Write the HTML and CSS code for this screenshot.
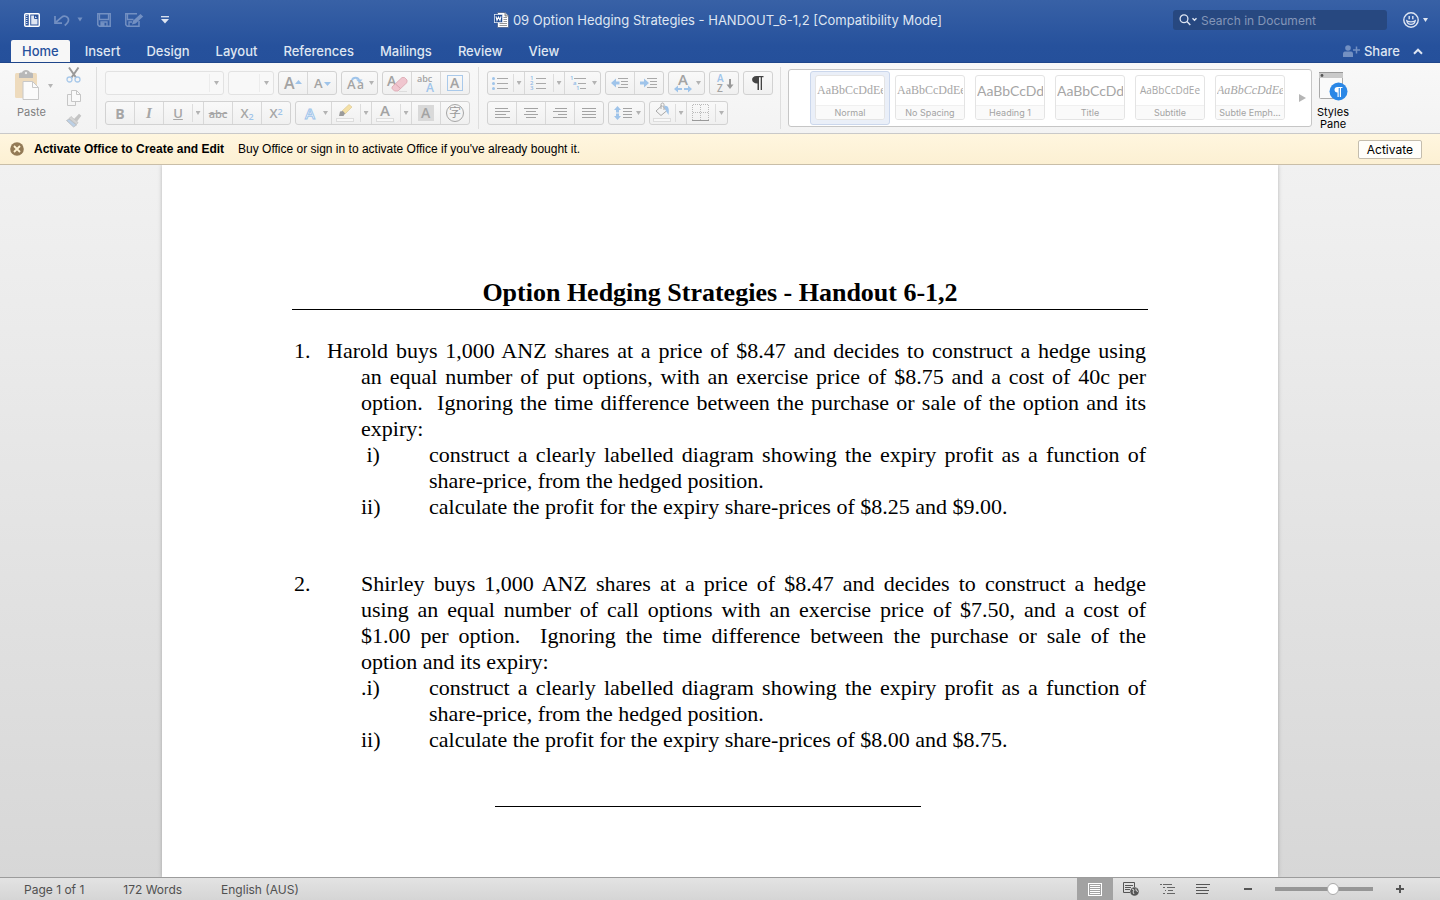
FILE: index.html
```html
<!DOCTYPE html>
<html lang="en">
<head>
<meta charset="utf-8">
<title>09 Option Hedging Strategies - HANDOUT_6-1,2</title>
<link rel="stylesheet" href="styles.css">
</head>
<body>
<header class="titlebar">
  <div class="top-row">
    <div class="quick">
      <button class="plain" aria-label="Document gallery"><svg width="16" height="14" viewBox="0 0 16 14"><rect x=".75" y=".75" width="14.5" height="12.5" rx="1" fill="#2b539b" stroke="#fff" stroke-width="1.5"/><path d="M2.8 2v10" stroke="#fff" stroke-width="1.2" stroke-dasharray="1 1"/><path d="M5.500 1v12" stroke="#fff" stroke-width="1.500"/><path d="M7.200 2.500h3.300l3 3v6H7.200z" fill="#dfe6f2"/><path d="M10.500 2v3.500H14" fill="none" stroke="#2b539b"/></svg></button>
      <button class="plain undo" aria-label="Undo"><svg width="29" height="14" viewBox="0 0 29 14"><g fill="none" stroke="#7390c2" stroke-width="1.7"><path d="M1 3v7.200h7"/><path d="M1.500 9.500 7.500 4.300c3-2.300 7-.5 7 2.700 0 2.200-1.300 3.500-3.800 5.500"/></g><path d="M23.500 4.500h5L26 8.500z" fill="#7390c2"/></svg></button>
      <button class="plain" aria-label="Save"><svg width="14" height="14" viewBox="0 0 14 14"><path d="M.8.8h12.400v12.400H2.300L.8 11.700z" fill="none" stroke="#7390c2" stroke-width="1.500"/><path d="M2.500 1v5.500h9V1M4 13V9h6v4" fill="none" stroke="#7390c2" stroke-width="1.300"/><path d="M4 9.500h3.500V13H4z" fill="#7390c2"/></svg></button>
      <button class="plain" aria-label="Save as"><svg width="19" height="14" viewBox="0 0 19 14"><path d="M14 8v5.200H2.300L.8 11.700V.8H12" fill="none" stroke="#7390c2" stroke-width="1.500"/><path d="M2.500 1v5.500h6M4 13V9h3" fill="none" stroke="#7390c2" stroke-width="1.300"/><path d="m7 11.500 1-3.700L15.500 1l2.700 2.500-7.500 7z" fill="#7390c2"/></svg></button>
      <button class="plain customize" aria-label="Customize toolbar"><svg width="8" height="8" viewBox="0 0 8 8"><path d="M0 .7h8" stroke="#dfe6f2" stroke-width="1.300"/><path d="M0 3h8L4 7.500z" fill="#dfe6f2"/></svg></button>
    </div>
    <h1 class="window-title"><svg width="15" height="16" viewBox="0 0 15 16"><path d="M3.500.5H11l3.500 3.500v11.500h-11z" fill="#fff" stroke="#4b5f85" stroke-width=".8"/><path d="M11 .5V4h3.500" fill="#ccc" stroke="#666" stroke-width=".7"/><path d="M9.500 5.500H13M9.500 7.500H13M9.500 9.500H13M5.500 11.500H13M5.500 13.500H13" stroke="#8a8a8a" stroke-width=".9"/><rect x=".4" y="2.400" width="8.200" height="8.200" fill="#214c93" stroke="#dfe6f2" stroke-width=".8"/><path d="m2 4.300 1 4L4.500 5 6 8.300l1-4" fill="none" stroke="#fff" stroke-width="1.100"/></svg><span>09 Option Hedging Strategies - HANDOUT_6-1,2 [Compatibility Mode]</span></h1>
    <div class="top-right">
      <label class="search"><svg width="18" height="12" viewBox="0 0 18 12"><circle cx="5" cy="4.700" r="3.900" fill="none" stroke="#dfe6f2" stroke-width="1.300"/><path d="m8 7.500 3.300 3.500M13.500 4.300l2 2 2-2" fill="none" stroke="#dfe6f2" stroke-width="1.400"/></svg><input type="text" placeholder="Search in Document" aria-label="Search in Document"></label>
      <button class="plain" aria-label="Feedback"><svg width="25" height="16" viewBox="0 0 25 16"><circle cx="8" cy="8" r="7.200" fill="none" stroke="#dfe6f2" stroke-width="1.400"/><path d="M6.200 4v3.200M9.800 4v3.200" stroke="#dfe6f2" stroke-width="1.400"/><path d="M3.800 8.800c.8 4.700 7.600 4.700 8.400 0-2 1.500-6.400 1.500-8.400 0z" fill="none" stroke="#dfe6f2" stroke-width="1.200"/><path d="M20 6h5l-2.500 4z" fill="#dfe6f2"/></svg></button>
    </div>
  </div>
  <nav class="tabs">
    <button class="tab active">Home</button><button class="tab">Insert</button><button class="tab">Design</button><button class="tab">Layout</button><button class="tab">References</button><button class="tab">Mailings</button><button class="tab">Review</button><button class="tab">View</button>
    <button class="share"><svg width="17" height="12" viewBox="0 0 17 12"><circle cx="5" cy="3" r="2.800" fill="#7390c2"/><path d="M0 12V9c0-2 1-2.500 3-2.500h4c2 0 3 .5 3 2.500v3z" fill="#7390c2"/><path d="M13.500 1.500v7M10 5h7" stroke="#7390c2" stroke-width="1.500"/></svg>Share</button>
    <button class="plain collapse" aria-label="Collapse ribbon"><svg width="10" height="7" viewBox="0 0 10 7"><path d="m1 5.700 4-4 4 4" fill="none" stroke="#dfe6f2" stroke-width="2"/></svg></button>
  </nav>
</header>

<section class="ribbon" aria-label="Home ribbon">
  <div class="clipboard">
    <button class="paste"><svg width="38" height="30" viewBox="0 0 38 30"><rect y="3" width="22" height="25" rx="1.500" fill="#eedbbd"/><path d="M4 8V4c0-1 1-1.500 3-1.500C7.500 1 9 0 11 0s3.500 1 4 2.500c2 0 3 .5 3 1.500v4z" fill="#b8b8b8"/><circle cx="11" cy="3" r="1.200" fill="#eee"/><path d="M8 11.500h9.500l6 6v12H8z" fill="#fbfbfb" stroke="#c8c8c8"/><path d="M17.500 11.500v6h6" fill="none" stroke="#c8c8c8"/><path d="M33 14h5l-2.500 4z" fill="#b5b5b5"/></svg><span>Paste</span></button>
    <div class="clip-tools">
      <button class="plain" aria-label="Cut"><svg width="16" height="16" viewBox="0 0 16 16"><path d="m3 .5 7 10M12.500.5l-7 10" stroke="#999" stroke-width="2"/><circle cx="3.500" cy="12.500" r="2.500" fill="none" stroke="#a9c9ea" stroke-width="1.300"/><circle cx="11.500" cy="12.500" r="2.500" fill="none" stroke="#a9c9ea" stroke-width="1.300"/></svg></button>
      <button class="plain" aria-label="Copy"><svg width="16" height="16" viewBox="0 0 16 16"><path d="M5.500 4.500h-4v11h8v-4" fill="none" stroke="#c6c6c6"/><path d="M5.500.5h5l4 4v7h-9z" fill="#fafafa" stroke="#c6c6c6"/><path d="M10.500.5v4h4" fill="none" stroke="#c6c6c6"/></svg></button>
      <button class="plain" aria-label="Format painter"><svg width="16" height="15" viewBox="0 0 16 15"><path d="m8 6 5-5.200 2.300 2L11 8.500z" fill="#c4c4c4"/><path d="m5 3.500 7 6-1.500 2-7.500-6z" fill="#d4d4d4" stroke="#bbb" stroke-width=".7"/><path d="M3 6 .5 7.500 7.500 14l3-2z" fill="#bcd0e6" stroke="#b5b5b5" stroke-width=".7"/></svg></button>
    </div>
  </div>
  <div class="block">
    <div class="line">
      <div class="combo font-name"><input type="text" aria-label="Font name" disabled><i class="caret"></i></div>
      <div class="combo font-size"><input type="text" aria-label="Font size" disabled><i class="caret"></i></div>
      <div class="group"><button aria-label="Grow font"><svg width="28" height="22" viewBox="0 0 28 22"><text x="5" y="17" class="g16">A</text><path d="m16 12 3.500-4 3.500 4z" fill="#9fc4ea"/></svg></button><button aria-label="Shrink font"><svg width="28" height="22" viewBox="0 0 28 22"><text x="6" y="16" class="g13">A</text><path d="m16 10 3.500 4 3.500-4z" fill="#9fc4ea"/></svg></button></div>
      <div class="group"><button class="wide" aria-label="Change case"><svg width="24" height="22" viewBox="0 0 24 22"><text x="5" y="17" class="g13">A</text><text x="15" y="17" class="g12">a</text><path d="M10 8c1-3 6-3 7 0" fill="none" stroke="#9fc4ea" stroke-width="2"/><path d="M14 7.500h6.500L17.500 11z" fill="#9fc4ea"/></svg><i class="caret"></i></button></div>
      <div class="group"><button aria-label="Clear formatting"><svg width="28" height="22" viewBox="0 0 28 22"><text x="4" y="14" class="g14">A</text><path d="M16 19.500h8" stroke="#ddd"/><path d="m9 15 10-9.500 2.500 0 2.500 2.500v2.500l-9 8.500h-3.500L9 16.500z" fill="#f0c6cf" stroke="#d9a6b0" stroke-width=".8"/><path d="m12.500 12 5 4.500" stroke="#d9a6b0"/></svg></button><button aria-label="Phonetic guide"><svg width="28" height="22" viewBox="0 0 28 22"><text x="5" y="10" class="g9">abc</text><text x="14" y="20" class="g12 blue">A</text></svg></button><button aria-label="Character border"><svg width="28" height="22" viewBox="0 0 28 22"><rect x="6.500" y="3.500" width="15" height="15" fill="none" stroke="#a9c9ea"/><text x="9" y="16" class="g14">A</text></svg></button></div>
    </div>
    <div class="line">
      <div class="group"><button class="bold">B</button><button class="italic">I</button><button class="under split"><u>U</u></button><button class="drop" aria-label="Underline options"><i class="caret"></i></button><button class="strike"><s>abc</s></button><button class="script">X<sub>2</sub></button><button class="script">X<sup>2</sup></button></div>
      <div class="group"><button class="wide" aria-label="Text effects"><svg width="24" height="22" viewBox="0 0 24 22"><text x="9" y="17" class="effect">A</text></svg><i class="caret"></i></button><button class="split" aria-label="Highlight"><svg width="28" height="22" viewBox="0 0 28 22"><path d="m10 9 7-6.500 3 2.500-7 7z" fill="#f4e0a6" stroke="#d8c48d" stroke-width=".6"/><path d="m8 9.500 3-.5 2 2.500-1.500 2.500H7z" fill="#9b9b9b"/><rect x="4.500" y="16.500" width="17" height="3" fill="#f8f8f8" stroke="#ddd"/></svg></button><button class="drop" aria-label="Highlight options"><i class="caret"></i></button><button class="split" aria-label="Font colour"><svg width="28" height="22" viewBox="0 0 28 22"><text x="8" y="14" class="g15">A</text><rect x="4.500" y="16.500" width="17" height="3" fill="#f8f8f8" stroke="#ddd"/></svg></button><button class="drop" aria-label="Font colour options"><i class="caret"></i></button><button aria-label="Character shading"><svg width="28" height="22" viewBox="0 0 28 22"><path d="M6 3h16v16H6z" fill="#d9d9d9"/><text x="9" y="16" class="g14">A</text></svg></button><button aria-label="Enclose characters"><svg width="28" height="22" viewBox="0 0 28 22"><circle cx="14" cy="11" r="8.500" fill="none" stroke="#a5a5a5"/><text x="8" y="15" class="cjk">字</text></svg></button></div>
    </div>
  </div>
  <div class="block">
    <div class="line">
      <div class="group"><button class="split narrow" aria-label="Bullets"><svg width="24" height="22" viewBox="0 0 24 22"><path d="M8 6.500h11M8 11.500h11M8 16.500h11" stroke="#a9a9a9"/><g fill="#9fc4ea"><circle cx="4.500" cy="6.500" r="1.500"/><circle cx="4.500" cy="11.500" r="1.500"/><circle cx="4.500" cy="16.500" r="1.500"/></g></svg></button><button class="drop" aria-label="Bullet options"><i class="caret"></i></button><button class="split" aria-label="Numbering"><svg width="26" height="22" viewBox="0 0 26 22"><path d="M10 6.500h10M10 11.500h10M10 16.500h10" stroke="#a9a9a9"/><g class="tiny"><text x="4" y="8">1</text><text x="4" y="13">2</text><text x="4" y="18">3</text></g></svg></button><button class="drop" aria-label="Numbering options"><i class="caret"></i></button><button class="wide" aria-label="Multilevel list"><svg width="24" height="22" viewBox="0 0 24 22"><path d="M9 6.500h12M13 11.500h8M15 16.500h6" stroke="#a9a9a9"/><g class="tiny"><text x="5" y="8">1</text><text x="8" y="13">a</text><text x="11" y="18">1</text></g></svg><i class="caret"></i></button></div>
      <div class="group"><button aria-label="Decrease indent"><svg width="28" height="22" viewBox="0 0 28 22"><path d="M12 6.500h10M15 9.500h7M15 12.500h7M12 15.500h10" stroke="#a9a9a9"/><path d="m5 11 5-4.500V9.500h3.500v3H10v3z" fill="#9fc4ea"/></svg></button><button aria-label="Increase indent"><svg width="28" height="22" viewBox="0 0 28 22"><path d="M12 6.500h10M15 9.500h7M15 12.500h7M12 15.500h10" stroke="#a9a9a9"/><path d="m14 11-5-4.500V9.500H5v3h4v3z" fill="#9fc4ea"/></svg></button></div>
      <div class="group"><button class="wide" aria-label="Text direction"><svg width="24" height="22" viewBox="0 0 24 22"><text x="9" y="13" class="g15">A</text><path d="m5 17 4-3.500V16h4v2H9v2.500zM23 17l-4-3.500V16h-4v2h4v2.500z" fill="#9fc4ea"/></svg><i class="caret"></i></button></div>
      <div class="group"><button aria-label="Sort"><svg width="28" height="22" viewBox="0 0 28 22"><text x="7" y="10" class="g10 blue">A</text><text x="7" y="20" class="g10">Z</text><path d="M20 7v7" stroke="#999" stroke-width="2"/><path d="M16.500 12.500h7L20 17z" fill="#999"/></svg></button></div>
      <div class="group"><button aria-label="Show formatting marks"><svg width="28" height="22" viewBox="0 0 28 22"><path d="M12.500 4h7v1.200H18V18h-1.300V5.200H15V18h-1.500v-6.500C6.500 11.500 6.500 4 12.500 4z" fill="#444"/></svg></button></div>
    </div>
    <div class="line">
      <div class="group"><button aria-label="Align left"><svg width="28" height="22" viewBox="0 0 28 22"><path d="M7 6.500h13M7 9.500h15M7 12.500h11M7 15.500h15" stroke="#a3a3a3"/></svg></button><button aria-label="Centre"><svg width="28" height="22" viewBox="0 0 28 22"><path d="M7 6.500h14M9 9.500h10M7 12.500h14M9 15.500h10" stroke="#a3a3a3"/></svg></button><button aria-label="Align right"><svg width="28" height="22" viewBox="0 0 28 22"><path d="M9 6.500h12M7 9.500h14M12 12.500h9M7 15.500h14" stroke="#a3a3a3"/></svg></button><button aria-label="Justify"><svg width="28" height="22" viewBox="0 0 28 22"><path d="M7 6.500h14M7 9.500h14M7 12.500h14M7 15.500h14" stroke="#a3a3a3"/></svg></button></div>
      <div class="group"><button class="wide" aria-label="Line spacing"><svg width="24" height="22" viewBox="0 0 24 22"><path d="M14 6.500h9M14 9.500h9M14 12.500h9M14 15.500h9" stroke="#a3a3a3"/><path d="m8.500 4 3.500 4h-2v2.500H7V8H5zM8.500 18l3.500-4h-2v-2.500H7V14H5z" fill="#9fc4ea"/></svg><i class="caret"></i></button></div>
      <div class="group"><button class="split narrow" aria-label="Shading"><svg width="24" height="22" viewBox="0 0 24 22"><path d="m5 9 6-5.500 5 5-6 5z" fill="#f4f4f4" stroke="#aaa"/><path d="M10 7V2.500c0-2 3-2 3 0V8" fill="none" stroke="#aaa"/><path d="M13 4c4-1 5.500 2 4.500 9l-2.500-4z" fill="#9fc4ea"/><rect x="2.500" y="16.500" width="17" height="3" fill="#f8f8f8" stroke="#ddd"/></svg></button><button class="drop" aria-label="Shading options"><i class="caret"></i></button><button class="split" aria-label="Borders"><svg width="28" height="22" viewBox="0 0 28 22"><path d="M5.500 18V2.500h16V18M13.500 3v15M6 10.500h15" fill="none" stroke="#bbb" stroke-dasharray="1 1"/><path d="M5 18.500h17" stroke="#999"/></svg></button><button class="drop" aria-label="Border options"><i class="caret"></i></button></div>
    </div>
  </div>
  <div class="gallery-wrap">
    <div class="gallery">
      <button class="style selected"><span class="card"><span class="sample serif">AaBbCcDdEe</span><span class="name">Normal</span></span></button>
      <button class="style"><span class="card"><span class="sample serif">AaBbCcDdEe</span><span class="name">No Spacing</span></span></button>
      <button class="style"><span class="card"><span class="sample big">AaBbCcDdEe</span><span class="name">Heading 1</span></span></button>
      <button class="style"><span class="card"><span class="sample big">AaBbCcDdEe</span><span class="name">Title</span></span></button>
      <button class="style"><span class="card"><span class="sample small">AaBbCcDdEe</span><span class="name">Subtitle</span></span></button>
      <button class="style"><span class="card"><span class="sample serif slant">AaBbCcDdEe</span><span class="name">Subtle Emph...</span></span></button>
      <button class="plain next" aria-label="More styles"><svg width="7" height="8" viewBox="0 0 7 8"><path d="M0 0v8l7-4z" fill="#b5b5b5"/></svg></button>
    </div>
    <button class="pane"><svg width="29" height="29" viewBox="0 0 29 29"><rect x=".5" y=".5" width="23" height="26" rx="1" fill="#fafafa" stroke="#aaa"/><path d="M0 0h24v6H0z" fill="#c9c9c9"/><path d="M0 .5h24" stroke="#999"/><circle cx="3" cy="3.500" r="1.400" fill="#555"/><circle cx="19.500" cy="19.500" r="9" fill="#2a87e6"/><path d="M18.500 15h5v1H22v9h-1.200v-9h-1.100v9h-1.200v-4.500c-4 0-4-5.500 0-5.500z" fill="#fff"/></svg><span>Styles<br>Pane</span></button>
  </div>
</section>

<aside class="notice">
  <button class="plain" aria-label="Dismiss"><svg width="14" height="14" viewBox="0 0 14 14"><circle cx="7" cy="7" r="6.800" fill="#937a56"/><path d="m4 4 6 6M10 4l-6 6" stroke="#fff3d3" stroke-width="1.800"/></svg></button>
  <strong>Activate Office to Create and Edit</strong>
  <span>Buy Office or sign in to activate Office if you've already bought it.</span>
  <button class="activate">Activate</button>
</aside>

<main class="workspace">
  <article class="page">
    <h2>Option Hedging Strategies - Handout 6-1,2</h2>
    <section class="question">
      <p class="stem"><span class="num tight">1.</span>Harold buys 1,000 ANZ shares at a price of $8.47 and decides to construct a hedge using an&nbsp;equal number of put options, with an exercise price of $8.75 and a cost of 40c per option.&nbsp; Ignoring the time difference between the purchase or sale of the option and its expiry:</p>
      <div class="part"><span class="roman">&nbsp;i)</span><p>construct a clearly labelled diagram showing the expiry profit as a function of share-price, from the hedged position.</p></div>
      <div class="part"><span class="roman">ii)</span><p>calculate the profit for the expiry share-prices of $8.25 and $9.00.</p></div>
    </section>
    <section class="question">
      <p class="stem"><span class="num">2.</span>Shirley buys 1,000 ANZ shares at a price of $8.47 and decides to construct a hedge using&nbsp;an equal number of call options with an exercise price of $7.50, and a cost of $1.00&nbsp;per option.&nbsp; Ignoring the time difference between the purchase or sale of the option&nbsp;and its expiry:</p>
      <div class="part"><span class="roman">.i)</span><p>construct a clearly labelled diagram showing the expiry profit as a function of share-price, from the hedged position.</p></div>
      <div class="part"><span class="roman">ii)</span><p>calculate the profit for the expiry share-prices of $8.00 and $8.75.</p></div>
    </section>
    <hr>
  </article>
</main>

<footer class="status">
  <span class="s-page">Page 1 of 1</span><span class="s-words">172 Words</span><span>English (AUS)</span>
  <div class="views">
    <button class="view on" aria-label="Print layout"><svg width="14" height="13" viewBox="0 0 14 13"><rect x=".5" y=".5" width="13" height="12" fill="none" stroke="#fff"/><path d="M2 2.500h10M2 4.500h10M2 6.500h10M2 8.500h10M2 10.500h10" stroke="#fff"/></svg></button>
    <button class="view" aria-label="Web layout"><svg width="16" height="14" viewBox="0 0 16 14"><path d="M7 10.500H.5V.5h11V5M2 3.500h8M2 5.500h6M2 7.500h5" fill="none" stroke="#555"/><circle cx="11.500" cy="9.500" r="4.300" fill="#555"/><path d="m9 7 2 1-1 2 1 2M13 6.500v2l2 1" fill="none" stroke="#ddd"/></svg></button>
    <button class="view" aria-label="Outline"><svg width="15" height="12" viewBox="0 0 15 12"><path d="M0 1.500h2M3 1.500h9M3 4.500h2M7 4.500h8M5 7.500h1M8 7.500h5M3 10.500h2M7 10.500h8" stroke="#666"/></svg></button>
    <button class="view" aria-label="Draft"><svg width="14" height="12" viewBox="0 0 14 12"><path d="M0 1.500h14M0 4.500h11M0 7.500h13M0 10.500h12" stroke="#555"/></svg></button>
  </div>
  <div class="zoom">
    <button class="plain" aria-label="Zoom out"><svg width="8" height="8" viewBox="0 0 8 8"><path d="M0 4h8" stroke="#555" stroke-width="2"/></svg></button>
    <input type="range" min="0" max="100" value="60" aria-label="Zoom">
    <button class="plain" aria-label="Zoom in"><svg width="8" height="8" viewBox="0 0 8 8"><path d="M0 4h8M4 0v8" stroke="#555" stroke-width="2"/></svg></button>
  </div>
</footer>
</body>
</html>
```
FILE: styles.css
```css
* { box-sizing: border-box; }
html, body { height: 100%; }
body {
  margin: 0;
  display: flex;
  flex-direction: column;
  overflow: hidden;
  font-family: Inter, Roboto, sans-serif;
  font-size: 12px;
  color: #000;
}
button, input { font: inherit; color: inherit; margin: 0; }
button { border: 0; background: none; padding: 0; }
svg { display: block; flex: none; overflow: visible; }
.plain { display: flex; align-items: center; }

/* Title bar and tabs */
.titlebar {
  flex: none;
  background: linear-gradient(#3861a6, #26519c 75%, #25509b);
  border-bottom: 1px solid #1f468b;
  color: #dfe6f2;
}
.top-row { display: grid; grid-template-columns: 1fr auto 1fr; align-items: center; height: 40px; padding: 0 12px 0 24px; }
.quick { display: flex; align-items: center; gap: 14px; }
.customize { margin-left: 3px; }
.window-title { margin: 0 16px 0 0; display: flex; align-items: center; gap: 4px; font-size: 13px; font-weight: 400; white-space: nowrap; }
.top-right { display: flex; align-items: center; justify-content: flex-end; gap: 16px; }
.search { display: flex; align-items: center; gap: 4px; width: 214px; height: 20px; padding: 0 6px; border-radius: 3px; background: #274880; }
.search input { width: 100%; min-width: 0; border: 0; padding: 0; background: none; outline: 0; font-size: 12px; }
.search input::placeholder { color: #8496b9; opacity: 1; }
.tabs { display: flex; align-items: stretch; height: 22px; padding: 0 17px 0 11px; font-size: 13px; font-weight: 500; }
.tab { padding: 0 13px; white-space: nowrap; }
.tab.active { margin-right: 2px; padding: 0 11px; background: #f7f7f7; color: #26519c; border-radius: 2px 2px 0 0; }
.share { display: flex; align-items: center; gap: 4px; margin-left: auto; }
.collapse { margin-left: 13px; }

/* Ribbon */
.ribbon { flex: none; display: flex; height: 71px; background: linear-gradient(#f8f8f8, #f3f3f3); border-bottom: 1px solid #c9c9c9; padding-top: 4px; overflow: hidden; }
.clipboard { display: flex; width: 97px; height: 62px; flex: none; border-right: 1px solid #dedede; }
.paste { display: flex; flex-direction: column; align-items: flex-start; gap: 5px; width: 50px; margin: 3px 0 0 15px; font-size: 11px; color: #808080; text-align: left; }
.paste span { margin-left: 2px; }
.clip-tools { display: flex; flex-direction: column; gap: 7px; padding-left: 1px; }
.block { display: flex; flex-direction: column; gap: 6px; flex: none; height: 62px; padding: 4px 8px 0; border-right: 1px solid #dedede; }
.block + .block { padding-right: 7px; }
.line { display: flex; gap: 4px; height: 24px; }
.group { display: flex; border: 1px solid #d2d2d2; border-radius: 3px; background: linear-gradient(#f9f9f9, #f0f0f0); color: #a6a6a6; }
.group button { display: flex; align-items: center; justify-content: center; flex: none; width: 29px; border-right: 1px solid #d8d8d8; }
.group button:last-child { width: 28px; border-right: 0; }
.group .wide, .group .wide:last-child { width: 36px; justify-content: flex-start; }
.group .wide:last-child { width: 35px; }
.group .wide .caret { margin-left: 3px; }
.group .split { width: 28px; border-right: 0; }
.group .narrow { width: 25px; }
.group .drop, .group .drop:last-child { width: 12px; padding-left: 1px; background: linear-gradient(#ddd, #ddd) left center / 1px 18px no-repeat; }
.caret { width: 5px; height: 4px; flex: none; background: #b3b3b3; clip-path: polygon(0 0, 100% 0, 50% 100%); }
.combo { display: flex; align-items: center; border: 1px solid #e2e2e2; border-radius: 3px; background: #f8f8f8; padding-right: 4px; }
.combo input { flex: 1; min-width: 0; height: 18px; border: 0; border-right: 1px solid #ececec; background: none; margin-right: 4px; }
.font-name { width: 119px; }
.font-size { width: 46px; }
.group text { font-family: "Open Sans", sans-serif; fill: #a3a3a3; font-size: 12px; font-weight: 600; }
.group .g9 { font-size: 9px; }
.group .g10 { font-size: 10px; }
.group .g13 { font-size: 13px; }
.group .g14 { font-size: 14px; }
.group .g15 { font-size: 15px; }
.group .g16 { font-size: 16px; }
.group .blue { fill: #9fc4ea; }
.group .tiny text { font-size: 6px; fill: #8fb9e6; }
.group .effect { font-size: 15px; fill: #fff; stroke: #9fc4ea; stroke-width: 1px; }
.group .cjk { font-family: "Noto Sans CJK SC", sans-serif; font-size: 12px; font-weight: 400; fill: #999; }
.bold { font: 700 14px "Open Sans", sans-serif; }
.italic { font: italic 700 15px "Liberation Serif", serif; }
.under, .script { font: 600 13px "Open Sans", sans-serif; }
.strike { font: 600 11px "Open Sans", sans-serif; }
.script sub, .script sup { font-size: 9px; line-height: 9px; color: #9fc4ea; }
.script sub { align-self: flex-end; margin-bottom: 3px; }
.script sup { align-self: flex-start; margin-top: 5px; }

/* Style gallery */
.gallery-wrap { display: flex; flex: 1; min-width: 0; padding-left: 7px; }
.gallery { display: flex; align-items: center; height: 58px; margin-top: 2px; padding: 0 5px 0 21px; border: 1px solid #c6c6c6; border-radius: 3px; background: #fff; flex: none; }
.style { width: 80px; height: 54px; padding: 3px 4px 4px; border: 1px solid transparent; border-radius: 3px; }
.style.selected { background: #eaeff8; border-color: #cbd7ec; }
.card { display: flex; flex-direction: column; height: 45px; border: 1px solid #e4e4e4; border-radius: 3px; background: #fff; overflow: hidden; }
.sample { height: 29px; margin: 0 1px; line-height: 29px; text-align: left; overflow: hidden; white-space: nowrap; color: #a6a6a6; font-size: 10px; }
.serif { font-family: "Liberation Serif", serif; font-size: 12px; }
.big { font-family: Lato, sans-serif; font-size: 14px; }
.small { font-family: "Open Sans", sans-serif; font-size: 10px; text-align: center; }
.slant { font-style: italic; }
.name { height: 14px; line-height: 14px; border-top: 1px solid #f0f0f0; background: #fafafa; font-size: 9px; color: #a3a3a3; text-align: center; white-space: nowrap; }
.next { margin-left: 9px; }
.pane { display: flex; flex-direction: column; align-items: center; gap: 5px; margin: 5px 0 0 5px; font-size: 11px; line-height: 12px; }

/* Activation notice */
.notice { flex: none; display: flex; align-items: center; height: 31px; padding: 0 18px 0 10px; background: linear-gradient(#fff6df, #fcf0d3); border-bottom: 1px solid #c9bea8; font-family: "Liberation Sans", sans-serif; font-size: 12px; white-space: nowrap; }
.notice strong { margin: 0 14px 0 10px; }
.activate { margin-left: auto; height: 19px; padding: 0 8px; border: 1px solid #c4bdae; border-radius: 2px; background: #fffefa; font-family: Inter, sans-serif; font-size: 12px; line-height: 15px; }

/* Document */
.workspace { flex: 1; min-height: 0; overflow: hidden; background: linear-gradient(#f1f1f1, #d7d7d7); }
.page { max-width: 1116px; min-height: 100%; margin: 0 auto; padding: 113px 130px 40px; background: #fff; box-shadow: 0 0 4px rgba(0, 0, 0, .25); font: 22px/26px "Liberation Serif", "Times New Roman", serif; }
.page p { margin: 0; text-align: justify; }
.page h2 { margin: 0 0 28px; padding-bottom: 1px; border-bottom: 1px solid #000; font-size: 26px; line-height: 30px; font-weight: 700; text-align: center; }
.question { margin-bottom: 51px; padding-right: 2px; }
.page .stem { padding-left: 69px; text-indent: -67px; }
.num { display: inline-block; width: 67px; text-indent: 0; }
.num.tight { width: 33px; }
.part { display: flex; padding-left: 69px; }
.roman { width: 68px; flex: none; }
.part p { flex: 1; }
.page hr { width: 426px; margin: 53px auto 0 203px; border: 0; border-top: 1px solid #000; }

/* Status bar */
.status { flex: none; display: flex; align-items: center; height: 23px; padding-left: 24px; background: linear-gradient(#e3e3e3, #d5d5d5); border-top: 1px solid #9c9c9c; color: #505050; font-size: 12px; }
.s-page, .s-words { margin-right: 39px; }
.views { display: flex; height: 100%; margin-left: auto; }
.view { display: flex; align-items: center; justify-content: center; width: 36px; }
.view.on { background: #a2a2a2; }
.zoom { display: flex; align-items: center; gap: 23px; padding: 0 36px 0 23px; }
.zoom input { appearance: none; width: 98px; height: 12px; background: linear-gradient(#969696, #969696) center / 100% 4px no-repeat; }
.zoom input::-webkit-slider-thumb { appearance: none; width: 12px; height: 12px; border-radius: 50%; border: 1px solid #aaa; background: #fff; }
```
